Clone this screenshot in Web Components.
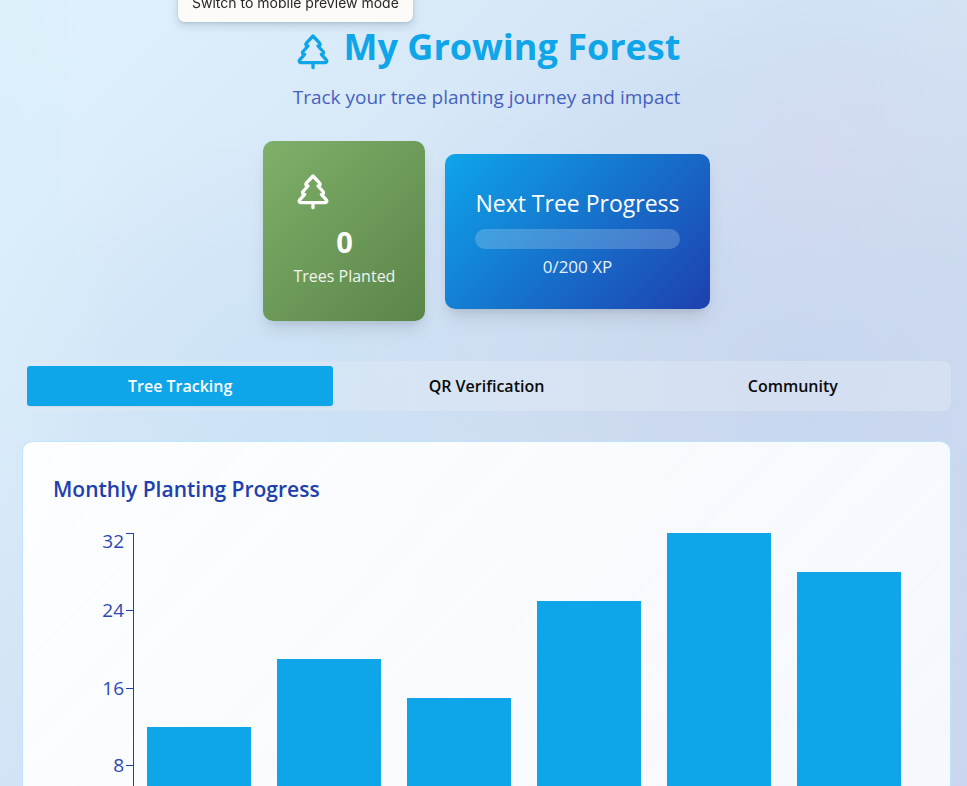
<!DOCTYPE html>
<html lang="en">
<head>
<meta charset="utf-8">
<meta name="viewport" content="width=device-width, initial-scale=1">
<title>My Growing Forest</title>
<style>
  html { height: 100%; }
  body {
    margin: 0; height: 100vh; overflow: hidden;
    font-family: "Open Sans", "Noto Sans", sans-serif;
    color: #1e40af;
    background:
      radial-gradient(ellipse 14% 20% at 85% 19%, rgba(212, 216, 242, .5), transparent),
      radial-gradient(ellipse 50% 50% at 82% 48%, rgba(197, 211, 238, .8), transparent),
      radial-gradient(ellipse 30% 34% at 28% 50%, rgba(200, 224, 246, .7), transparent),
      radial-gradient(ellipse 12% 50% at 0% 22%, rgba(216, 239, 248, .8), transparent),
      linear-gradient(135deg, #e0f2fc 0%, #d2e3f5 45%, #d4e1f2 60%, #cad6ef 100%);
  }
</style>
</head>
<body>
<forest-page>
  <preview-tooltip slot="overlay">Switch to mobile preview mode</preview-tooltip>
  <page-heading slot="heading">My Growing Forest
    <span slot="subtitle">Track your tree planting journey and impact</span>
  </page-heading>
  <tree-count slot="stats" value="0">Trees Planted</tree-count>
  <xp-progress slot="stats" value="0" max="200">Next Tree Progress</xp-progress>
  <tab-bar>
    <tab-button selected>Tree Tracking</tab-button>
    <tab-button>QR Verification</tab-button>
    <tab-button>Community</tab-button>
  </tab-bar>
  <chart-card>
    <span slot="title">Monthly Planting Progress</span>
    <bar-chart values="12,19,15,25,32,28" max="32"></bar-chart>
  </chart-card>
</forest-page>
<script>
const define = (name, html, setup) => {
  const template = document.createElement('template');
  template.innerHTML = html;
  customElements.define(name, class extends HTMLElement {
    constructor() {
      super();
      this.attachShadow({ mode: 'open' }).append(template.content.cloneNode(true));
    }
    connectedCallback() { if (setup) setup(this, this.shadowRoot); }
  });
};

define('tree-icon', `
  <style>
    :host { display: block; width: 40px; height: 40px; flex: none; }
    svg { display: block; width: 100%; height: 100%; }
  </style>
  <svg viewBox="0 0 24 24" fill="none" stroke="currentColor" stroke-width="2" stroke-linecap="round" stroke-linejoin="round" aria-hidden="true">
    <path d="m17 14 3 3.3a1 1 0 0 1-.7 1.7H4.7a1 1 0 0 1-.7-1.7L7 14h-.3a1 1 0 0 1-.7-1.7L9 9h-.2A1 1 0 0 1 8 7.3L12 3l4 4.3a1 1 0 0 1-.8 1.7H15l3 3.3a1 1 0 0 1-.7 1.7H17Z"/>
    <path d="M12 22v-3"/>
  </svg>`);

define('forest-page', `
  <style>
    :host { display: block; padding: 20px 16px 0 22px; }
    .stats { display: flex; justify-content: center; align-items: center; gap: 20px; margin: 30px 0 40px; }
  </style>
  <slot name="overlay"></slot>
  <header>
    <slot name="heading"></slot>
    <div class="stats"><slot name="stats"></slot></div>
  </header>
  <main><slot></slot></main>`);

define('preview-tooltip', `
  <style>
    :host {
      position: fixed; top: -14px; left: 178px; z-index: 2;
      padding: 7px 14px 9px; border-radius: 7px;
      background: #fcfbf8; color: #272725;
      font: 14px/20px Inter, sans-serif; white-space: nowrap;
      box-shadow: 0 4px 8px rgba(30, 50, 80, .16), 0 1px 3px rgba(30, 50, 80, .12);
    }
  </style>
  <slot></slot>`);

define('page-heading', `
  <style>
    :host { display: block; text-align: center; }
    h1 { display: flex; justify-content: center; align-items: center; gap: 11px; margin: 0 0 9px;
         font-size: 36px; line-height: 54px; font-weight: 700; color: #0ea5e9; }
    tree-icon { margin-top: 8px; }
    p { margin: 0; font-size: 19px; line-height: 28px; opacity: .8; }
  </style>
  <h1><tree-icon></tree-icon><span><slot></slot></span></h1>
  <p><slot name="subtitle"></slot></p>`);

define('tree-count', `
  <style>
    :host { display: block; padding: 30px; border-radius: 10px; color: #fff; text-align: center;
            background: linear-gradient(135deg, #7fb069, #5a8549);
            box-shadow: 0 12px 18px -4px rgba(0, 0, 0, .1), 0 5px 8px -4px rgba(0, 0, 0, .1); }
    .value { margin-top: 12px; font-size: 29px; line-height: 38px; font-weight: 700; }
    .label { font-size: 16px; line-height: 30px; opacity: .9; }
  </style>
  <tree-icon></tree-icon>
  <div class="value"></div>
  <div class="label"><slot></slot></div>`,
  (el, root) => { root.querySelector('.value').textContent = el.getAttribute('value'); });

define('xp-progress', `
  <style>
    :host { display: block; padding: 30px; border-radius: 10px; color: #fff; text-align: center;
            background: linear-gradient(135deg, #0ea5e9, #1e40af);
            box-shadow: 0 12px 18px -4px rgba(0, 0, 0, .1), 0 5px 8px -4px rgba(0, 0, 0, .1); }
    label { display: block; font-size: 23px; line-height: 38px; }
    progress { display: block; width: 100%; height: 20px; margin: 7px 0 5px; border: 0; border-radius: 10px;
               overflow: hidden; appearance: none; background: rgba(255, 255, 255, .2); }
    progress::-webkit-progress-bar { background: transparent; }
    progress::-webkit-progress-value { background: #fff; }
    .amount { font-size: 17px; line-height: 25px; opacity: .9; }
  </style>
  <label for="bar"><slot></slot></label>
  <progress id="bar"></progress>
  <div class="amount"></div>`,
  (el, root) => {
    const value = el.getAttribute('value'), max = el.getAttribute('max');
    const bar = root.querySelector('progress');
    bar.max = max; bar.value = value;
    root.querySelector('.amount').textContent = value + '/' + max + ' XP';
  });

define('tab-bar', `
  <style>
    :host { display: grid; grid-auto-flow: column; grid-auto-columns: 1fr; padding: 5px; border-radius: 8px;
            background: rgba(224, 234, 244, .5); }
  </style>
  <slot></slot>`,
  el => {
    el.setAttribute('role', 'tablist');
    el.addEventListener('click', event => {
      const tab = event.target.closest('tab-button');
      if (tab) for (const item of el.children) item.toggleAttribute('selected', item === tab);
    });
  });

define('tab-button', `
  <style>
    :host { display: block; }
    button { display: block; width: 100%; height: 40px; padding: 0; border: 0; border-radius: 3px;
             background: none; color: #0a0a0a; font: 600 16px/26px "Open Sans", "Noto Sans", sans-serif; cursor: pointer; }
    :host([selected]) button { background: #0ea5e9; color: #fff; box-shadow: 0 1px 2px rgba(0, 0, 0, .06); }
  </style>
  <button role="tab"><slot></slot></button>`);

define('chart-card', `
  <style>
    :host { display: block; margin-top: 30px; padding: 30px; border: 1px solid rgba(186, 230, 253, .8); border-radius: 10px;
            background: linear-gradient(135deg, rgba(255, 255, 255, .93), rgba(250, 252, 255, .87)) padding-box;
            }
    h2 { margin: 0 0 26px; font-size: 21px; line-height: 35px; font-weight: 600; }
  </style>
  <h2><slot name="title"></slot></h2>
  <slot></slot>`);

define('bar-chart', `
  <style>
    :host { display: flex; height: 310px; padding-right: 6px; }
    svg { flex: none; width: 81px; height: 311px; overflow: visible; }
    path { fill: none; stroke: #1e40af; stroke-width: 1; }
    text { fill: #1e40af; font-size: 19px; text-anchor: end; opacity: .95; }
    .bars { flex: 1; display: flex; align-items: flex-end; }
    .bars div { flex: 1; margin: 0 min(13px, 2%); background: #0ea5e9; }
  </style>
  <svg role="img" aria-label="Trees planted axis"></svg>
  <div class="bars"></div>`,
  (el, root) => {
    const max = Number(el.getAttribute('max'));
    const height = 310, ticks = 4;
    let line = 'M80.5 0V310', labels = '';
    for (let i = 0; i < ticks; i++) {
      const y = Math.floor(height * i / ticks);
      line += 'M73 ' + (y + .5) + 'H80';
      labels += '<text x="71" y="' + (y + (i ? 7 : 15)) + '">' + (max - max * i / ticks) + '</text>';
    }
    root.querySelector('svg').innerHTML = '<path d="' + line + '"/>' + labels;
    for (const value of el.getAttribute('values').split(',')) {
      const bar = document.createElement('div');
      bar.style.height = value / max * 100 + '%';
      root.querySelector('.bars').append(bar);
    }
  });
</script>
</body>
</html>
